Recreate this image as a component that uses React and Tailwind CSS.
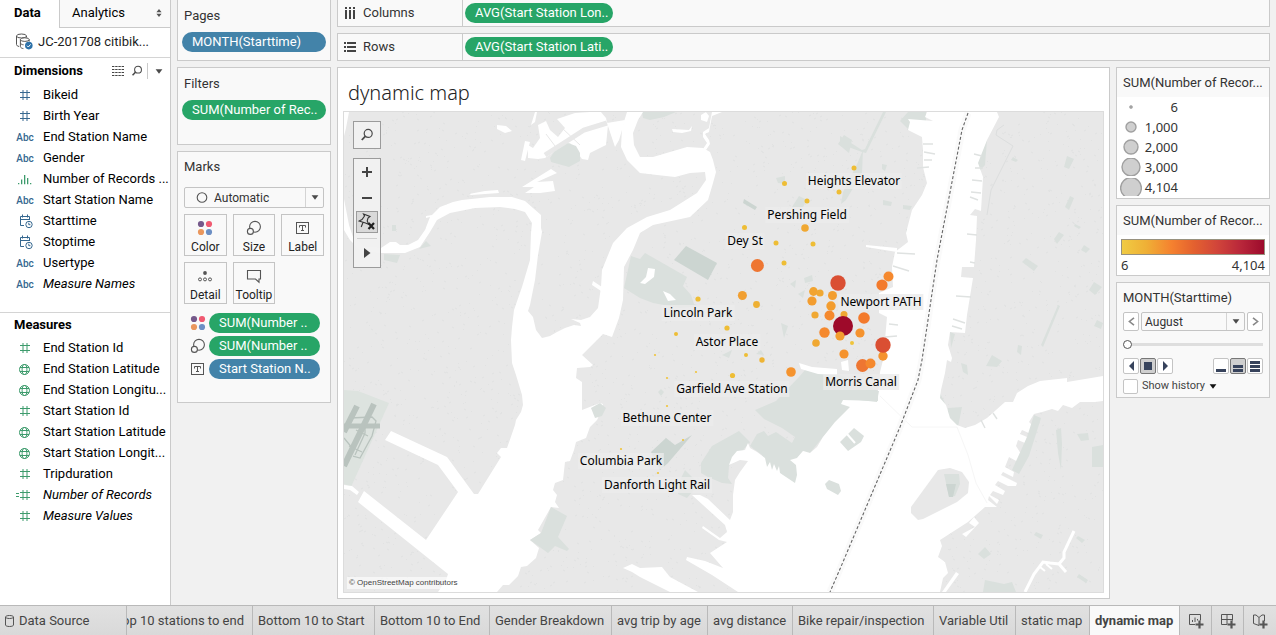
import React from "react";

const ui = "font-['Roboto','Liberation_Sans',sans-serif]";
const mapFont = "font-['Noto_Sans','Open_Sans',sans-serif]";

/* ---------- icons ---------- */

function HashIcon({ calculated }) {
  return (
    <svg width="20" height="16" viewBox="0 0 20 16" fill="none" stroke="currentColor" strokeWidth="1" aria-hidden="true">
      <path d="M8 3v10M12 3v10M5 5.5h10M5 10.500h10" />
      {calculated && <path d="M1 6.5h3M1 9.5h3" />}
    </svg>
  );
}

function GlobeIcon() {
  return (
    <svg width="20" height="16" viewBox="0 0 20 16" fill="none" stroke="currentColor" strokeWidth="1" aria-hidden="true">
      <circle cx="9.5" cy="8.5" r="5" />
      <ellipse cx="9.5" cy="8.5" rx="2.4" ry="5" />
      <path d="M5 6.5h9M5 10.5h9" />
    </svg>
  );
}

function BinsIcon() {
  return (
    <svg width="20" height="16" viewBox="0 0 20 16" fill="currentColor" aria-hidden="true">
      <path d="M3 12h1.3v1.3H3zM6 8.5h1.3v4.8H6zM9 4h1.3v9.3H9zM12 7h1.3v6.3H12zM15 12h1.3v1.3H15z" />
    </svg>
  );
}

function DateTimeIcon() {
  return (
    <svg width="20" height="16" viewBox="0 0 20 16" fill="none" stroke="currentColor" strokeWidth="1" aria-hidden="true">
      <path d="M9 12.5H5.5v-9h9V7M5.5 6.5h9M7.5 1.5v3M12.5 1.5v3" />
      <circle cx="14" cy="11.5" r="3.2" />
      <path d="M13.8 9.7v2h1.6" />
    </svg>
  );
}

function AbcIcon() {
  return <span className="pt-0.5 text-[10px] font-medium leading-4">Abc</span>;
}

function SearchIcon({ size = 14 }) {
  return (
    <svg width={size} height={size} viewBox="0 0 14 14" fill="none" stroke="#4a4a4a" aria-hidden="true">
      <circle cx="8.2" cy="5.4" r="4" strokeWidth="1.2" />
      <path d="M5.2 8.4L1.8 12" strokeWidth="1.8" />
    </svg>
  );
}

function ColorIcon() {
  return (
    <svg width="16" height="16" viewBox="0 0 16 16" aria-hidden="true">
      <circle cx="4" cy="4" r="3.1" fill="#75598b" />
      <circle cx="12" cy="4" r="3.1" fill="#f05a71" />
      <circle cx="4" cy="12" r="3.1" fill="#ea975d" />
      <circle cx="12" cy="12" r="3.1" fill="#6c8fc4" />
    </svg>
  );
}

function SizeIcon() {
  return (
    <svg width="16" height="16" viewBox="0 0 16 16" fill="#f9f9f9" stroke="#555" strokeWidth="1.1" aria-hidden="true">
      <circle cx="9" cy="6.8" r="5.4" />
      <circle cx="4.4" cy="11.4" r="3" />
    </svg>
  );
}

function LabelIcon() {
  return (
    <svg width="16" height="16" viewBox="0 0 16 16" fill="none" stroke="#555" aria-hidden="true">
      <rect x="1.5" y="2.5" width="12" height="11" />
      <path d="M4.500 7.500V5.500h6v2M7.500 5.500v5.500M6 10.500h3" strokeWidth="1" />
    </svg>
  );
}

function DetailIcon() {
  return (
    <svg width="16" height="16" viewBox="0 0 16 16" fill="none" stroke="#555" aria-hidden="true">
      <circle cx="8" cy="5" r="1.9" fill="#555" stroke="none" />
      <circle cx="3" cy="11.4" r="1.5" />
      <circle cx="8" cy="11.4" r="1.5" />
      <circle cx="13" cy="11.4" r="1.5" />
    </svg>
  );
}

function TooltipIcon() {
  return (
    <svg width="16" height="16" viewBox="0 0 16 16" fill="none" stroke="#555" strokeWidth="1.1" aria-hidden="true">
      <path d="M1.5 2.5h13v8.5H13v3.2L9.5 11h-8z" />
    </svg>
  );
}

function Caret({ color = "#4a4a4a" }) {
  return (
    <svg width="8" height="5" viewBox="0 0 8 5" fill={color} aria-hidden="true">
      <path d="M.6.2h6.8L4 4.8z" />
    </svg>
  );
}

function DataSourceIcon() {
  return (
    <svg width="18" height="17" viewBox="0 0 18 17" fill="none" stroke="#555" aria-hidden="true">
      <ellipse cx="6.5" cy="3" rx="5" ry="2" />
      <path d="M1.5 3v8.5c0 1 1 1.6 2.6 2M11.5 3v1.5" />
      <ellipse cx="9.8" cy="6.6" rx="4.4" ry="1.8" fill="#fff" />
      <path d="M5.4 6.6v7c0 1 1.4 1.8 3 2M14.2 6.6v2M5.6 10.4c.4.8 1.6 1.3 3 1.4" />
      <circle cx="13.8" cy="12.6" r="3.8" fill="#2d71a8" stroke="none" />
      <path d="M12 12.7l1.3 1.3 2.3-2.6" stroke="#fff" />
    </svg>
  );
}

/* ---------- left pane ---------- */

const dimensions = [
  ["Bikeid", HashIcon],
  ["Birth Year", HashIcon],
  ["End Station Name", AbcIcon],
  ["Gender", AbcIcon],
  ["Number of Records ...", BinsIcon, "green"],
  ["Start Station Name", AbcIcon],
  ["Starttime", DateTimeIcon],
  ["Stoptime", DateTimeIcon],
  ["Usertype", AbcIcon],
  ["Measure Names", AbcIcon, "blue", true],
];

const measures = [
  ["End Station Id", HashIcon],
  ["End Station Latitude", GlobeIcon],
  ["End Station Longitu...", GlobeIcon],
  ["Start Station Id", HashIcon],
  ["Start Station Latitude", GlobeIcon],
  ["Start Station Longit...", GlobeIcon],
  ["Tripduration", HashIcon],
  ["Number of Records", HashIcon, "green", true, true],
  ["Measure Values", HashIcon, "green", true],
];

function FieldList({ fields, tone }) {
  return (
    <ul>
      {fields.map(([name, Icon, own, italic, calculated]) => (
        <li key={name} className="flex h-[21px] items-center pl-[15px]">
          <span className={"flex w-5 shrink-0 items-center justify-center " + ((own || tone) === "green" ? "text-[#3d9b6c]" : "text-[#35678f]")}>
            {calculated ? <Icon calculated /> : <Icon />}
          </span>
          <span className={"pl-2 text-[13px] leading-4 whitespace-nowrap text-black" + (italic ? " italic" : "")}>{name}</span>
        </li>
      ))}
    </ul>
  );
}

function DataPane() {
  return (
    <aside className="w-[171px] shrink-0 overflow-hidden border-r border-[#cacaca] bg-white">
      <div className="flex h-7 text-[13px] leading-4 text-black" role="tablist">
        <button role="tab" aria-selected="true" className="w-[59px] shrink-0 pb-0.5 pl-3.5 text-left font-bold">Data</button>
        <button role="tab" aria-selected="false" className="flex flex-1 items-center justify-between border-b border-l border-[#cacaca] bg-[#f9f9f9] pr-2 pb-0.5 pl-3">
          Analytics
          <svg width="6" height="8" viewBox="0 0 6 8" fill="#555" aria-hidden="true"><path d="M3 0l2.6 3.2H.4zM3 8L.4 4.8h5.2z" /></svg>
        </button>
      </div>
      <div className="flex h-[30px] items-center border-b border-[#d4d4d4] pb-0.5 pl-[15px] text-[13px] leading-4 text-[#222]">
        <DataSourceIcon />
        <span className="pl-[5px] whitespace-nowrap">JC-201708 citibik...</span>
      </div>
      <div className="flex h-[26px] items-center pl-3.5">
        <h2 className="flex-1 text-[13px] leading-4 font-bold text-black">Dimensions</h2>
        <button aria-label="View as list">
          <svg width="12" height="10" viewBox="0 0 12 10" stroke="#444" aria-hidden="true">
            <path d="M0 .5h12M0 3.5h12M0 6.5h12M0 9.5h12" strokeDasharray="2.4 .8" />
          </svg>
        </button>
        <button aria-label="Find field" className="pl-[7px]"><SearchIcon size={12} /></button>
        <span className="ml-1 h-4 w-px bg-[#cacaca]" />
        <button aria-label="Dimension options" className="px-[7px]"><Caret /></button>
      </div>
      <FieldList fields={dimensions} tone="blue" />
      <h2 className="mt-[18px] h-[25px] border-t border-[#d4d4d4] pt-1 pl-3.5 text-[13px] leading-4 font-bold text-black">Measures</h2>
      <FieldList fields={measures} tone="green" />
    </aside>
  );
}

/* ---------- shelves ---------- */

function Pill({ children, blue, className }) {
  return (
    <button className={"h-5 rounded-full pl-2.5 text-left text-[13px] leading-5 whitespace-nowrap text-white " + (blue ? "bg-[#4383a9] " : "bg-[#27a567] ") + className}>
      {children}
    </button>
  );
}

function MarkButton({ label, children }) {
  return (
    <button className="flex h-[42px] flex-col items-center justify-between border border-[#c4c4c4] bg-[#f9f9f9] pt-[5px] text-[12px] leading-4 text-[#222]">
      {children}
      {label}
    </button>
  );
}

function CardColumn() {
  const card = "border border-[#cacaca] bg-[#f9f9f9]";
  const title = "px-1.5 text-[13px] leading-4 text-[#333]";
  return (
    <div className="flex w-[154px] shrink-0 flex-col gap-1.5">
      <section className={"h-[61px] border-t-0 pt-2 " + card}>
        <h3 className={title}>Pages</h3>
        <div className="px-1 pt-2"><Pill blue className="block w-full">MONTH(Starttime)</Pill></div>
      </section>
      <section className={"h-[78px] pt-2 " + card}>
        <h3 className={title}>Filters</h3>
        <div className="px-1 pt-2"><Pill className="block w-full">SUM(Number of Rec..</Pill></div>
      </section>
      <section className={"h-[252px] pt-[7px] " + card}>
        <h3 className={title}>Marks</h3>
        <div className="relative mx-1.5 mt-3 h-[21px]">
          <select aria-label="Mark type" className="block h-full w-full appearance-none rounded-xs border border-[#c4c4c4] bg-[#f9f9f9] pl-[29px] text-[12px] leading-4 text-[#333]">
            <option>Automatic</option>
          </select>
          <svg className="pointer-events-none absolute top-1 left-3" width="13" height="13" viewBox="0 0 13 13" aria-hidden="true"><circle cx="6" cy="6.5" r="4.8" fill="none" stroke="#555" strokeWidth="1.1" /></svg>
          <span className="pointer-events-none absolute inset-y-px right-px flex w-[18px] items-center justify-center border-l border-[#d4d4d4]"><Caret /></span>
        </div>
        <div className="mx-1.5 mt-1.5 grid grid-cols-3 gap-1.5">
          <MarkButton label="Color"><ColorIcon /></MarkButton>
          <MarkButton label="Size"><SizeIcon /></MarkButton>
          <MarkButton label="Label"><LabelIcon /></MarkButton>
          <MarkButton label="Detail"><DetailIcon /></MarkButton>
          <MarkButton label="Tooltip"><TooltipIcon /></MarkButton>
        </div>
        <ul className="mt-[9px] flex flex-col gap-[3px] pr-2.5 pl-3">
          <li className="flex items-center gap-[3px]"><ColorIcon /><Pill className="flex-1">SUM(Number ..</Pill></li>
          <li className="flex items-center gap-[3px]"><SizeIcon /><Pill className="flex-1">SUM(Number ..</Pill></li>
          <li className="flex items-center gap-[3px]"><LabelIcon /><Pill blue className="flex-1">Start Station N..</Pill></li>
        </ul>
      </section>
    </div>
  );
}

function Shelf({ label, icon, pill, first }) {
  return (
    <section className={"flex border border-[#cacaca] bg-[#f9f9f9] " + (first ? "h-[27px] border-t-0" : "h-7")}>
      <h3 className="flex w-[125px] shrink-0 items-center gap-[7px] border-r border-[#cacaca] pl-1.5 text-[13px] leading-4 text-[#333]">
        {icon}
        {label}
      </h3>
      <div className="flex items-center pl-0.5"><Pill className="w-[148px]">{pill}</Pill></div>
    </section>
  );
}

/* ---------- map ---------- */

const stations = [
  [854, 168, 2.5, "#eebd35"], [784.5, 183.5, 2.5, "#eebd35"], [839, 192, 2.5, "#eebd35"], [807, 201, 2.5, "#eebd35"],
  [805, 228, 3.8, "#f0a832"], [744.5, 227.5, 2.5, "#eebd35"], [776, 243, 2.5, "#eebd35"], [813, 244, 2.5, "#eebd35"],
  [757.4, 265.5, 6.5, "#ee7632"], [784, 263, 2.5, "#eebd35"], [742.4, 295.5, 4.5, "#f19f31"], [756.5, 304.5, 3.4, "#eeb033"],
  [698, 299, 2.6, "#eebd35"], [676, 334, 2, "#eebd35"], [727, 328, 2.6, "#eebd35"], [655, 355, 1.1, "#efc43c"],
  [667, 378, 1.1, "#efc43c"], [696, 372, 1.1, "#efc43c"], [746, 355, 2, "#eebd35"], [762, 360, 2.7, "#eeb435"],
  [732.5, 375.5, 2.6, "#eebd35"], [791, 372, 4.8, "#f5932e"], [667, 406, 1.1, "#efc43c"], [683, 440, 1.1, "#efc43c"],
  [621, 449, 1.1, "#efc43c"], [658, 473, 1.1, "#efc43c"], [813.5, 291.5, 4.4, "#f2a430"], [820, 293, 3.6, "#f0a832"],
  [832.5, 295.5, 4.5, "#f39d2f"], [812, 301, 4.6, "#f39d2f"], [831, 306, 4.7, "#f39d2f"], [815, 315, 3.6, "#f0a832"],
  [829.5, 315.5, 5, "#f5892e"], [844, 314.5, 3.5, "#f0a832"], [852, 343, 2, "#efc43c"], [838, 283, 7.7, "#da4f33"],
  [843, 326, 10, "#9e0a2a"], [824.5, 332.5, 5.2, "#f5892e"], [840, 336, 4.6, "#f39d2f"], [816, 343, 3.8, "#f0a832"],
  [888.5, 276.5, 5, "#f5892e"], [882, 285, 5.6, "#f37a2c"], [864, 318, 5.8, "#f37a2c"], [860, 333, 4.6, "#f5932e"],
  [883, 356, 4.7, "#f5932e"], [883, 345, 7.7, "#da4f33"], [844, 354, 4.6, "#f5932e"], [862.5, 365.5, 6.4, "#ee7632"],
  [870.5, 363.5, 5, "#f5892e"],
];

const places = [
  ["Heights Elevator", 854, 181], ["Pershing Field", 807, 215], ["Dey St", 745, 241], ["Lincoln Park", 698, 313],
  ["Astor Place", 727, 342], ["Newport PATH", 881, 302], ["Garfield Ave Station", 732, 389], ["Morris Canal", 861, 382],
  ["Bethune Center", 667, 418], ["Columbia Park", 621, 461], ["Danforth Light Rail", 657, 485],
];

const origin = { x: 344, y: 112, w: 759, h: 480 };

function speckPath() {
  let seed = 7;
  const next = () => (seed = (seed * 16807) % 2147483647) / 2147483647;
  let d = "";
  for (let i = 0; i < 3600; i++) {
    const x = Math.round(origin.x + next() * origin.w);
    const y = Math.round(origin.y + next() * origin.h);
    d += `M${x} ${y}l${next() > 0.5 ? 2 : 1} ${next() > 0.5 ? 1 : -1}`;
  }
  return d;
}

const specks = speckPath();

function BaseMap() {
  return (
    <svg className="h-full w-full" viewBox="344 112 759 480" preserveAspectRatio="xMidYMid slice" role="img" aria-label="Map of Jersey City">
      <rect x="344" y="112" width="759" height="480" fill="#e8e8e8" />
      <path d={specks} stroke="#e1e2e2" strokeWidth="1" />

      <g fill="#dae0dd">
        <path d="M384 254L400 255 397 263 384 260zM419 249L426 241 431 246zM392 225h4v6h-4z" />
        <path d="M642 112H676L664 117 650 120 643 118z" />
        <path d="M840 136L862 150 865 149 883 112 886 112 866 153 862 152 840 144zM838 144L844 135 852 140 849 153zM908 112H926V136L908 129 900 121z" />
        <path d="M776 178L785 176 785 184 778 183zM792 207L799 196 807 200 803 207zM882 164L887 165 885 171 882 169zM883 200L892 202 891 206 883 205zM903 205L912 206 910 210 903 209zM906 229L916 231 915 235 906 233zM858 162L863 150 862 173 846 200 841 204 843 192z" />
        <path d="M624 288L631 256 640 259 645 253 687 277 683 286 691 295 694 304 700 306 680 308 653 303 640 298z" />
        <path d="M790 284L796 280 795 288zM804 278L812 275 813 281 805 283zM798 294L805 290 803 298zM781 323L788 326 784 338zM658 392L661 389 664 392 661 396zM722 355L732 350 729 358zM756 354L761 350 764 355z" />
        <path d="M755 410L776 401 798 378 806 369 835 373 870 388 879 391 879 402 850 407 823 437 810 453 803 451 797 458 797 483 790 483 780 473 767 467 762 455 750 446 757 434 764 431 768 436 776 432 792 443 795 437 782 428 774 424 764 419z" />
        <path d="M701 463L712 446 739 431 750 442 738 456 729 466 728 478 732 484 722 483 708 477 701 473zM681 478L685 470 699 484 687 498 678 494z" />
        <path d="M976 165L987 140 985 165 979 172zM994 163L983 176zM1013 157L1018 160 1016 162 1011 160zM1067 156L1074 159 1069 169 1064 167zM1070 196L1074 198 1069 210 1065 207zM1059 232L1064 235 1057 244 1054 239zM1075 224L1081 227 1079 229 1074 226zM1084 245L1090 249 1086 253 1081 250zM1026 258L1038 266 1034 271 1022 262zM1094 282L1102 287 1095 295 1089 290zM1097 320L1103 323 1101 329 1094 326zM1058 305L1060 306 1043 347 1041 345zM950 332L955 334 951 348zM992 355L1002 361 997 367 986 366zM1018 345L1022 346 1021 355 1017 352zM961 363L967 365 968 375 963 372z" />
        <path d="M940 393L944 401 947 410 943 408 940 400zM948 408L962 407 958 427 948 418z" />
      </g>
      <g fill="#ccd5d1">
        <path d="M674 260L686 246 717 263 708 280zM744 199L757 207 755 210 743 203z" />
        <path d="M651 452L666 438 675 445 692 435 668 463 660 470z" />
      </g>

      <path d="M344 390L358 391 389 403 351 487 344 484z" fill="#dde3df" />
      <g stroke="#b9c3be" fill="none">
        <path d="M344 426H380" strokeWidth="5" />
        <path d="M374 404L344 466" strokeWidth="6" />
        <path d="M357 406L344 432" strokeWidth="6" />
        <path d="M350 418L372 417 376 421 372 436 360 458 353 456M349 446L362 452M368 436L356 430M365 419V433L355 455M344 438L353 449" strokeWidth="1.3" />
      </g>

      <g fill="#fff">
        <path d="M344 112h5l-3 16-2 8z" />
        <path d="M344 199L349 225 353 237 365 247 381 248 390 242 396 242 400 245 408 245 418 240 425 230 430 217 426 218 426 216 432 215 440 207 453 202 462 200 490 197 512 197 525 201 533 208 541 215 541 228 542 232 538 255 535 280 530 305 528 311 533 317 536 330 542 338 550 336 557 332 565 328 574 325 581 326 580 323 571 319 581 320 590 317 598 308 601 287 602 270 613 243 627 228 647 217 670 210 697 193 706 180 705 172 690 173 675 177 657 175 640 173 627 160 621 147 622 128 627 112H643L638 120 633 133 634 145 640 157 653 157 687 147 703 148 710 152 713 160 716 172 713 183 708 200 690 217 653 225 640 233 633 250 624 267 623 300 619 318 612 337 603 334 597 340 582 355 593 365 590 367 577 368 576 378 582 382 582 410 600 403 603 404 601 412 597 420 590 427 586 438 576 442 574 450 570 461 565 462 563 480 555 483 553 490 557 495 555 502 559 508 551 507 538 530 541 533 530 540 539 548 536 558 527 566 521 567 518 576 509 585 503 585 497 592H438L446 580 448 574 358 502 364 491 426 540 458 492 438 465 385 440 391 431 447 457 474 494 478 494 501 457 497 453 501 448 507 448 515 425 516 420 521 412 523 405 522 395 516 375 512 363 511 340 512 327 514 310 522 287 530 260 531 233 532 223 525 212 515 209 500 207 475 208 450 213 437 220 430 232 420 247 405 253 381 253 360 250 350 240 344 230z" />
        <path d="M344 485L352 486 359 492 357 495 350 490 344 489z" />
        <path d="M557 119L575 113 590 112H601L606 118 608 125 606 145 590 153 588 160 582 159 570 143 560 148 545 158 538 159 528 158 528 145 533 148 540 138 538 125 546 121 550 130 558 137 565 128z" />
        <path d="M521 160L525 141 530 142 525 161zM531 125L535 112H537L535 122zM497 125L506 126 512 131 505 133 497 129z" />
        <path d="M607 123L625 120 619 140 615 147z" />
        <path d="M522 187L551 169 557 173 537 182 553 181 555 191 540 193 525 193 534 187zM469 194L485 191 498 190 499 193 471 195z" />
        <path d="M672 129L689 130 692 126 691 131 682 133 673 132zM701 115L706 112 709 116 707 122 701 120zM640 283L646 277 648 268 655 269 654 277 645 284zM663 291L670 294 676 300 668 301zM593 281L602 287 601 291 592 285z" />
        <path d="M712 112H722L712 116 709 132 705 134 709 140 710 144 706 150 703 149 707 143 703 137 703 132 709 128 711 117z" />
        <path d="M799 363L812 367 837 369V375L818 374 801 369zM841 362L848 360 849 371 842 370zM866 245L897 248 897 252 866 247z" />
      </g>

      <path
        fill="#fff"
        d="M927 112L925 117 933 121 908 119 910 122 908 130 922 137 923 150 923 167 927 183 922 195 912 210 906 233 908 242 895 252 892 267 893 287 879 293 879 313 887 317 885 340 883 360 880 372 878 390 878 401 843 400 841 404 850 407 835 422 823 437 817 447 810 453 803 451 797 458 790 460 796 465 797 475 795 483 780 473 779 466 777 471 774 464 772 470 770 462 767 467 765 458 757 452 750 448 748 443 745 450 737 451 732 457 729 465 740 460 748 461 740 472 735 480 733 495 733 512 730 520 708 499 700 495 692 495 725 525 727 532 720 538 703 526 702 528 719 540 727 542 710 553 723 568 705 561 687 557 686 560 712 575 738 592H940L943 578 948 573 945 562 938 557 942 546 940 540 968 522 985 507 997 507 988 500 989 496 997 504 999 500 990 495 993 491 1003 495 1005 491 995 485 998 481 1008 486 1016 486 1017 483 1001 475 1003 472 1013 477 1014 472 1005 467 1009 457 1020 463 1023 457 1016 446 1018 440 1025 443 1027 437 1020 434 1022 430 1031 434 1033 426 1029 422 1034 414 1042 412 1052 409 1058 411 1063 405 1072 408 1080 402 1095 402 1103 401V376L1067 382 1067 378 1040 381 1028 386 1017 393 1013 402 1005 402 996 410 987 418 975 425 965 428 957 425 950 418 946 405 940 398 941 390 945 373 947 360 951 362 952 358 948 345 950 332 965 333 967 315 973 278 961 277 962 267 974 267 976 240 977 216 970 215 975 209 981 211 983 177 978 163 987 140 999 117 997 112z"
      />
      <path fill="none" stroke="#fff" strokeWidth="3" d="M1074 531L1064 552 1064 558 1059 564M1025 592L1034 574 1043 562 1050 563 1059 564 1066 572" />
      <path fill="none" stroke="#fff" strokeWidth="2" d="M1040 567L1045 571M1046 564L1052 569" />
      <path fill="#fff" d="M962 534L975 527 969 523 974 517 979 523 966 537zM956 572L959 574 946 592H942z" />
      <path fill="#fff" d="M623 568L632 564 640 568 662 567 670 577 698 592H670L640 577 632 572z" />
      <path d="M923 144h10M924 152l11 2M924 160h8M917 168l12-1M897 253l18 1M893 266l16 5M889 324l9 1M885 337l12-1M975 168h8M972 180l10 1M971 192l10 1M970 197l8 3M970 262l5 1M967 234l10 1M956 296l15 1M953 319l12 4M952 326l10 3M974 154l8 2M981 420l4 8M993 413l4 6" stroke="#dfe2e1" strokeWidth="1.4" />

      <path fill="#e8e8e8" d="M938 470L950 468 962 472 969 482 968 493 957 502 923 519 918 520 911 513 911 507z" />
      <path d="M545 155L567 141 584 130 607 123" stroke="#e8e8e8" strokeWidth="5" fill="none" />
      <path d="M546 134L558 150M562 128L580 145" stroke="#e8e8e8" strokeWidth="1" fill="none" />
      <g fill="#dae0dd">
        <path d="M550 158L554 152 568 143 576 146 580 153 580 161 569 167 551 162z" />
        <path d="M551 507L567 516 558 537 569 549 567 551 555 546 548 553 530 540 541 533z" />
        <path d="M840 442L854 428 864 436 861 442 848 451zM839 390L879 391 877 402 841 398zM825 484L829 480 839 484 841 491 838 495 827 489z" />
        <path d="M944 474L959 474 960 484 955 496 949 497 946 483zM1034 415L1041 418 1029 456 1019 474 1012 470 1027 437z" />
        <path d="M1056 430L1061 428 1062 444 1061 470 1058 453zM1077 434L1088 433 1089 440 1081 441zM1092 447L1103 445V467H1092zM985 547L991 554 984 559 978 554zM985 580L1004 584 1012 582 1016 592H983zM1036 532L1043 535 1041 539 1034 535zM1078 536L1085 540 1082 543 1076 538zM1079 574L1088 580 1086 583 1077 577z" />
        <path d="M591 408L600 403 606 408 602 416 595 418z" />
      </g>
      <path d="M946 484L956 484 953 497 949 497z" fill="#ccd5d1" />
      <path d="M847 434L855 443" stroke="#fff" strokeWidth="2" />

      <path d="M1004 125L997 130 996 135 1013 146 991 190 987 215" fill="none" stroke="#dcdede" strokeWidth="1" />
      <path d="M880 396L912 427H957L968 455 976 483 987 503" fill="none" stroke="#f6f6f6" strokeWidth="1" />
      <path d="M968 113L962 130 937 260 922 360 918 380 900 427 840 569 830 592" fill="none" stroke="#fafafa" strokeWidth="7" />
      <path d="M968 113L962 130 937 260 922 360 918 380 900 427 840 569 830 592" fill="none" stroke="#666" strokeWidth="1.1" strokeDasharray="3 2" />
    </svg>
  );
}

function Marks() {
  return (
    <svg className="pointer-events-none absolute inset-0 h-full w-full" viewBox="344 112 759 480" preserveAspectRatio="xMidYMid slice" aria-hidden="true">
      {stations.map(([x, y, r, fill], i) => (
        <circle key={i} cx={x} cy={y} r={r} fill={fill} />
      ))}
    </svg>
  );
}

function MapToolbar() {
  return (
    <div className="absolute top-[9px] left-[9px] flex w-7 flex-col gap-[9px]">
      <button aria-label="Search map" className="flex h-7 items-center justify-center border border-[#9b9b9b] bg-[#f1f1f1]">
        <SearchIcon />
      </button>
      <div className="flex h-[110px] flex-col items-center border border-[#9b9b9b] bg-[#f1f1f1]/95">
        <button aria-label="Zoom in" className="flex h-[26px] w-full items-center justify-center">
          <svg width="10" height="10" viewBox="0 0 10 10" stroke="#444" strokeWidth="2" aria-hidden="true"><path d="M5 0v10M0 5h10" /></svg>
        </button>
        <button aria-label="Zoom out" className="flex h-[26px] w-full items-center justify-center">
          <svg width="10" height="10" viewBox="0 0 10 10" stroke="#444" strokeWidth="2" aria-hidden="true"><path d="M0 5h10" /></svg>
        </button>
        <button aria-label="Reset map" className="flex h-[22px] w-[22px] shrink-0 items-center justify-center border border-[#9b9b9b] bg-[#d9d9d9]">
          <svg width="18" height="18" viewBox="0 0 18 18" fill="none" stroke="#333" strokeWidth="1.1" aria-hidden="true">
            <path d="M5.500 1l6.500 2.500-2 1.500-.8 3 1.600 3.500-3.300-1.500L1 8l3-1.500L6.500 3zM5 9.500L3.200 14" />
            <path d="M10.500 10l5.500 6M16 10l-5.500 6" strokeWidth="2.200" stroke="#222" />
          </svg>
        </button>
        <span className="mt-[5px] h-px w-5 shrink-0 bg-[#d0d0d0]" />
        <button aria-label="Map tools" className="flex w-full flex-1 items-center justify-center">
          <svg width="7" height="10" viewBox="0 0 7 10" fill="#444" aria-hidden="true"><path d="M0 0l6.5 5L0 10z" /></svg>
        </button>
      </div>
    </div>
  );
}

function Viz() {
  return (
    <section className="flex min-w-0 flex-1 flex-col border border-[#cacaca] bg-white px-[5px] pb-[5px]">
      <h1 className={"h-[43px] pt-[9px] pl-[5px] text-[20px] leading-8 font-light text-[#222] " + mapFont}>dynamic map</h1>
      <div className="relative min-h-[482px] flex-1 border border-[#dcdcdc]">
        <div className="absolute inset-0 overflow-hidden">
          <BaseMap />
          {places.map(([name, x, y]) => (
            <span
              key={name}
              className={"absolute -translate-x-1/2 -translate-y-1/2 bg-[#ebebeb]/80 px-0.5 text-[12px] leading-4 whitespace-nowrap text-black " + mapFont}
              style={{ left: `${((x - origin.x) / origin.w) * 100}%`, top: `${((y - origin.y) / origin.h) * 100}%` }}
            >
              {name}
            </span>
          ))}
          <Marks />
          <MapToolbar />
          <small className="absolute bottom-[3px] left-[3px] bg-white/60 px-0.5 font-['Liberation_Sans',sans-serif] text-[8px] leading-3 text-[#444]">© OpenStreetMap contributors</small>
        </div>
      </div>
    </section>
  );
}

/* ---------- legends ---------- */

const sizes = [["6", 1.5], ["1,000", 5], ["2,000", 7], ["3,000", 9], ["4,104", 10.4]];

function Legends() {
  const card = "border border-[#cacaca] bg-white";
  const title = "bg-[#f9f9f9] px-1.5 pt-[7px] text-[13px] leading-4 text-[#333] whitespace-nowrap";
  const step = "flex h-[19px] w-4 items-center justify-center rounded-xs border border-[#c4c4c4] bg-white";
  const play = "flex h-4 w-4 items-center justify-center rounded-xs border border-[#c4c4c4] bg-white";
  const playOn = "flex h-4 w-4 items-center justify-center rounded-xs border border-[#777] bg-[#cfcfcf]";
  return (
    <div className="flex w-[154px] shrink-0 flex-col gap-1.5">
      <section className={card}>
        <h3 className={"h-[29px] " + title}>SUM(Number of Recor...</h3>
        <ul>
          {sizes.map(([n, r]) => (
            <li key={n} className={"flex h-5 items-center pl-[3px] text-[13px] leading-5 text-[#333] " + mapFont}>
              <svg width="22" height="18" viewBox="0 0 22 18" aria-hidden="true">
                <circle cx="11" cy={r > 10 ? 10 : 9} r={r} fill={r < 2 ? "#a5a5a5" : "#cfcfcf"} stroke="#a0a0a0" strokeWidth={r < 2 ? 0.6 : 1.4} />
              </svg>
              <span className="w-9 text-right">{n}</span>
            </li>
          ))}
        </ul>
        <div className="h-px" />
      </section>
      <section className={"h-[71px] " + card}>
        <h3 className={"h-[29px] " + title}>SUM(Number of Recor...</h3>
        <div className="mx-1 mt-1 h-4 border border-[#98917e] bg-[linear-gradient(90deg,#f0cb43,#efb036_17%,#f5812f_35%,#e4622f_50%,#d1453a_67%,#b8263a_84%,#9c0b2c)]" />
        <div className={"flex justify-between px-1 pt-0.5 text-[13px] leading-4 text-[#333] " + mapFont}><span>6</span><span>4,104</span></div>
      </section>
      <section className="h-[116px] border border-[#cacaca] bg-[#f9f9f9]">
        <h3 className={"h-[29px] " + title}>MONTH(Starttime)</h3>
        <div className="flex gap-0.5 px-1.5">
          <button aria-label="Previous month" className={step}><svg width="7" height="9" viewBox="0 0 7 9" fill="none" stroke="#888" strokeWidth="1.6" aria-hidden="true"><path d="M6 .8L1.4 4.5 6 8.2" /></svg></button>
          <div className="relative h-[19px] flex-1">
            <select aria-label="Month" className="block h-full w-full appearance-none rounded-xs border border-[#c4c4c4] bg-[#f9f9f9] pl-[3px] text-[12px] leading-4 text-[#333]">
              <option>August</option>
            </select>
            <span className="pointer-events-none absolute inset-y-px right-px flex w-[18px] items-center justify-center border-l border-[#d4d4d4]"><Caret /></span>
          </div>
          <button aria-label="Next month" className={step}><svg width="7" height="9" viewBox="0 0 7 9" fill="none" stroke="#888" strokeWidth="1.6" aria-hidden="true"><path d="M1 .8l4.6 3.7L1 8.2" /></svg></button>
        </div>
        <div className="flex h-[27px] items-center px-1.5">
          <input
            type="range" aria-label="Month position" min="0" max="10" defaultValue="0"
            className="h-[3px] w-full appearance-none bg-[#dedede] [&::-webkit-slider-thumb]:h-[9px] [&::-webkit-slider-thumb]:w-[9px] [&::-webkit-slider-thumb]:appearance-none [&::-webkit-slider-thumb]:rounded-full [&::-webkit-slider-thumb]:border [&::-webkit-slider-thumb]:border-[#555] [&::-webkit-slider-thumb]:bg-white"
          />
        </div>
        <div className="flex justify-between px-1.5">
          <div className="flex gap-px">
            <button aria-label="Play backward" className={play}><svg width="5" height="10" viewBox="0 0 5 10" fill="#37435c" aria-hidden="true"><path d="M5 0v10L0 5z" /></svg></button>
            <button aria-label="Stop" className={playOn}><svg width="8" height="8" viewBox="0 0 8 8" aria-hidden="true"><path d="M0 0h8v8H0z" fill="#37435c" /></svg></button>
            <button aria-label="Play forward" className={play}><svg width="5" height="10" viewBox="0 0 5 10" fill="#37435c" aria-hidden="true"><path d="M0 0v10l5-5z" /></svg></button>
          </div>
          <div className="flex gap-px">
            <button aria-label="Slow" className={play}><svg width="10" height="12" viewBox="0 0 10 12" fill="#37435c" aria-hidden="true"><path d="M0 9h10v3H0z" /></svg></button>
            <button aria-label="Medium" className={playOn}><svg width="10" height="12" viewBox="0 0 10 12" fill="#37435c" aria-hidden="true"><path d="M0 9h10v3H0zM0 5h10v3H0z" /></svg></button>
            <button aria-label="Fast" className={play}><svg width="10" height="12" viewBox="0 0 10 12" fill="#37435c" aria-hidden="true"><path d="M0 9h10v3H0zM0 5h10v3H0zM0 1h10v3H0z" /></svg></button>
          </div>
        </div>
        <div className="flex items-center px-1.5 pt-1">
          <input id="history" type="checkbox" className="h-[15px] w-[15px] appearance-none rounded-xs border border-[#c4c4c4] bg-white" />
          <label htmlFor="history" className="pr-1 pl-1 text-[11px] leading-4 text-[#444]">Show history</label>
          <button aria-label="History options"><Caret color="#111" /></button>
        </div>
      </section>
    </div>
  );
}

/* ---------- sheet tabs ---------- */

const sheets = [
  ["Bottom 10 to Start", "w-[122px]"],
  ["Bottom 10 to End", "w-[115px]"],
  ["Gender Breakdown", "w-[122px]"],
  ["avg trip by age", "w-24"],
  ["avg distance", "w-[85px]"],
  ["Bike repair/inspection", "w-[141px]"],
  ["Variable Util", "w-[82px]"],
  ["static map", "w-[74px]"],
];

function SheetTabs() {
  const tab = "shrink-0 border-l border-[#b9b9b9] pl-[5px] text-left whitespace-nowrap ";
  const add = "flex w-8 shrink-0 items-center justify-center border-l border-[#b9b9b9]";
  const plus = <path d="M12.5 8.5v8M8.5 12.5h8" strokeWidth="2.2" />;
  return (
    <nav className="flex h-[30px] shrink-0 overflow-hidden border-t border-[#b9b9b9] bg-linear-to-b from-[#e1e1e1] to-[#d9d9d9] text-[13px] leading-4 text-[#444]">
      <button className="flex w-[126px] shrink-0 items-center gap-[5px] pl-[5px]">
        <svg width="9" height="12" viewBox="0 0 9 12" fill="none" stroke="#555" aria-hidden="true"><path d="M.5 2v8c0 .8 1.6 1.5 4 1.5s4-.7 4-1.5V2M.5 2C.5 1.2 2.1.5 4.5.5s4 .7 4 1.5-1.6 1.500-4 1.500S.5 2.8.5 2z" /></svg>
        Data Source
      </button>
      <button className="flex w-[126px] shrink-0 items-center justify-end overflow-hidden border-l border-[#b9b9b9] pr-2 whitespace-nowrap">Top 10 stations to end</button>
      {sheets.map(([name, width]) => (
        <button key={name} className={tab + width}>{name}</button>
      ))}
      <button aria-current="page" className={tab + "w-[90px] bg-[#f9f9f9] font-bold"}>dynamic map</button>
      <button aria-label="New worksheet" className={add}>
        <svg width="18" height="18" viewBox="0 0 18 18" fill="none" stroke="#555" aria-hidden="true"><path d="M8 12.5H2.5v-10h11v6M5.5 10V8M8 10V5.5M10.5 8.500V7" />{plus}</svg>
      </button>
      <button aria-label="New dashboard" className={add}>
        <svg width="18" height="18" viewBox="0 0 18 18" fill="none" stroke="#555" aria-hidden="true"><path d="M8 12.5H2.5v-10h11v6M2.5 7.5h11M8 2.5v10" />{plus}</svg>
      </button>
      <button aria-label="New story" className={add}>
        <svg width="18" height="18" viewBox="0 0 18 18" fill="none" stroke="#555" aria-hidden="true"><path d="M8 5.5v8L2.5 11.500v-8.500h2.500zL11 3h2.500v6" />{plus}</svg>
      </button>
    </nav>
  );
}

export default function App() {
  return (
    <div className={"flex min-h-screen flex-col bg-[#f1f1f1] " + ui}>
      <div className="flex flex-1">
        <DataPane />
        <main className="flex min-w-0 flex-1 gap-1.5 px-1.5 pb-1.5">
          <CardColumn />
          <div className="flex min-w-0 flex-1 flex-col gap-1.5">
            <Shelf
              first label="Columns" pill="AVG(Start Station Lon.."
              icon={<svg width="12" height="12" viewBox="0 0 12 12" fill="#444" aria-hidden="true"><path d="M1 0h2v2H1zM1 3h2v9H1zM5 0h2v2H5zM5 3h2v9H5zM9 0h2v2H9zM9 3h2v9H9z" /></svg>}
            />
            <Shelf
              label="Rows" pill="AVG(Start Station Lati.."
              icon={<svg width="12" height="12" viewBox="0 0 12 12" fill="#444" aria-hidden="true"><path d="M0 1h2v2H0zM3 1h9v2H3zM0 5h2v2H0zM3 5h9v2H3zM0 9h2v2H0zM3 9h9v2H3z" /></svg>}
            />
            <div className="flex flex-1 gap-1.5">
              <Viz />
              <Legends />
            </div>
          </div>
        </main>
      </div>
      <SheetTabs />
    </div>
  );
}
